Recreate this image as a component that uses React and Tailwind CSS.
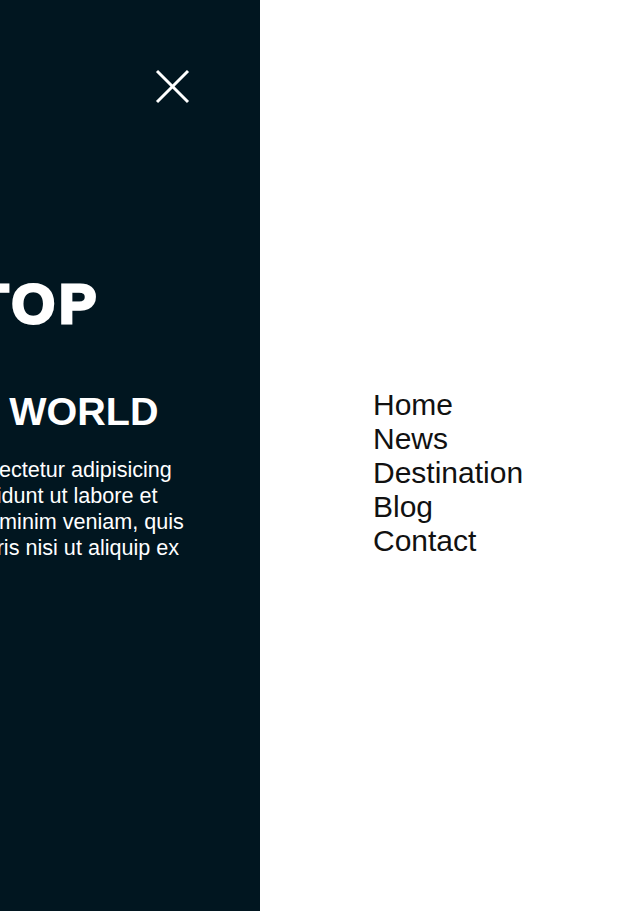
import React from "react";

export default function App() {
  return (
    <div className="flex w-[628px] h-[911px] font-['Liberation_Sans',Arial,sans-serif]">
      <aside className="w-[260px] shrink-0 bg-[#011620] overflow-hidden flex flex-col text-white">
        <div className="pt-[69px] pl-[155px]">
          <svg className="block" width="35" height="35" viewBox="0 0 35 35" aria-label="Close">
            <line x1="2" y1="2" x2="33" y2="33" stroke="white" strokeWidth="3" />
            <line x1="33" y1="2" x2="2" y2="33" stroke="white" strokeWidth="3" />
          </svg>
        </div>
        <h1 className="mt-[172px] ml-[-408px] whitespace-nowrap text-[56px] font-bold leading-none tracking-[4px] [-webkit-text-stroke:3px_white]">
          REACH THE TOP
        </h1>
        <h2 className="mt-[60px] ml-[-265px] whitespace-nowrap text-[39.5px] font-bold leading-none">
          AROUND THE WORLD
        </h2>
        <p className="mt-[25px] ml-[-319px] whitespace-nowrap text-[21.6px] leading-[26px]">
          Lorem ipsum dolor sit amet, consectetur adipisicing
          <br />
          elit, sed do eiusmod tempor incididunt ut labore et
          <br />
          dolore magna aliqua. Ut enim ad minim veniam, quis
          <br />
          nostrud exercitation ullamco laboris nisi ut aliquip ex
        </p>
      </aside>
      <nav className="flex-1 bg-white pl-[113px] pt-[388px]">
        <ul className="flex flex-col text-[30px] leading-[34px] text-[#111]">
          <li>Home</li>
          <li>News</li>
          <li>Destination</li>
          <li>Blog</li>
          <li>Contact</li>
        </ul>
      </nav>
    </div>
  );
}
